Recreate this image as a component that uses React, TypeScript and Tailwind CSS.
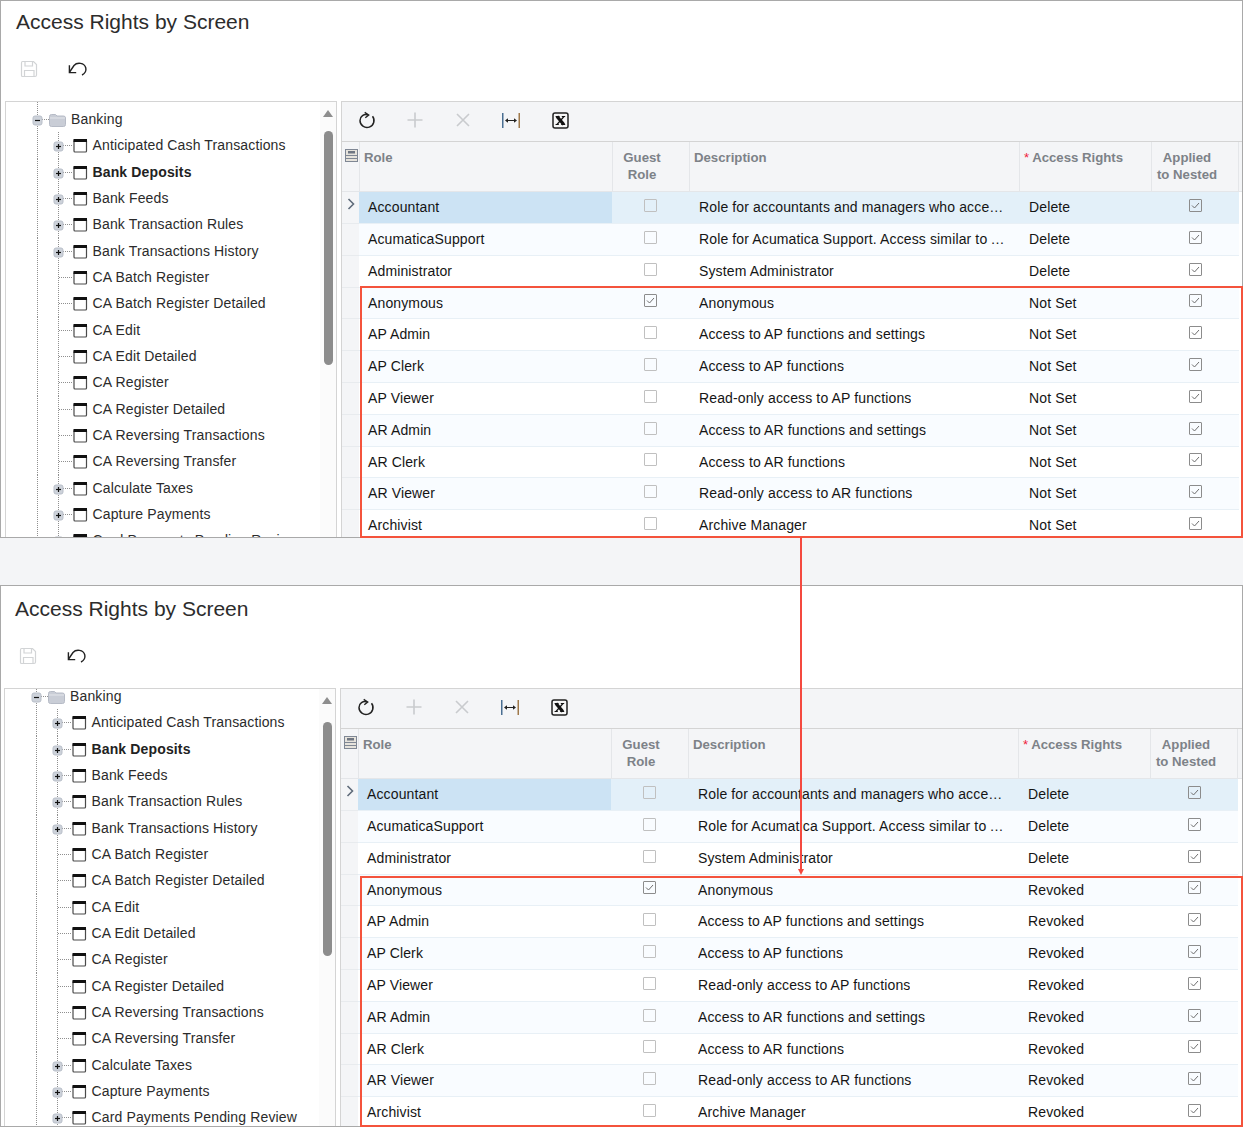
import React from 'react';

const treeItems: { name: string; plus?: boolean; bold?: boolean }[] = [
  { name: 'Anticipated Cash Transactions', plus: true },
  { name: 'Bank Deposits', plus: true, bold: true },
  { name: 'Bank Feeds', plus: true },
  { name: 'Bank Transaction Rules', plus: true },
  { name: 'Bank Transactions History', plus: true },
  { name: 'CA Batch Register' },
  { name: 'CA Batch Register Detailed' },
  { name: 'CA Edit' },
  { name: 'CA Edit Detailed' },
  { name: 'CA Register' },
  { name: 'CA Register Detailed' },
  { name: 'CA Reversing Transactions' },
  { name: 'CA Reversing Transfer' },
  { name: 'Calculate Taxes', plus: true },
  { name: 'Capture Payments', plus: true },
  { name: 'Card Payments Pending Review', plus: true },
];

const roles: { role: string; guest?: boolean; desc: string; rights: string }[] = [
  { role: 'Accountant', desc: 'Role for accountants and managers who access financial data', rights: 'Delete' },
  { role: 'AcumaticaSupport', desc: 'Role for Acumatica Support. Access similar to Administrator', rights: 'Delete' },
  { role: 'Administrator', desc: 'System Administrator', rights: 'Delete' },
  { role: 'Anonymous', guest: true, desc: 'Anonymous', rights: 'x' },
  { role: 'AP Admin', desc: 'Access to AP functions and settings', rights: 'x' },
  { role: 'AP Clerk', desc: 'Access to AP functions', rights: 'x' },
  { role: 'AP Viewer', desc: 'Read-only access to AP functions', rights: 'x' },
  { role: 'AR Admin', desc: 'Access to AR functions and settings', rights: 'x' },
  { role: 'AR Clerk', desc: 'Access to AR functions', rights: 'x' },
  { role: 'AR Viewer', desc: 'Read-only access to AR functions', rights: 'x' },
  { role: 'Archivist', desc: 'Archive Manager', rights: 'x' },
];

const Dots = ({ x1, y1, x2, y2 }: { x1: number; y1: number; x2: number; y2: number }) => (
  <line x1={x1} y1={y1} x2={x2} y2={y2} stroke="#8f8f8f" strokeWidth="1" strokeDasharray="1 1" />
);

const ExpandBox = ({ cx, cy, minus }: { cx: number; cy: number; minus?: boolean }) => (
  <g>
    <rect x={cx - 4.5} y={cy - 4.5} width="9" height="9" rx="2" fill="#cdd2da" stroke="#b9bfc9" />
    <path d={`M${cx - 2.5} ${cy}H${cx + 2.5}`} stroke="#111" strokeWidth="1.2" />
    {!minus && <path d={`M${cx} ${cy - 2.5}V${cy + 2.5}`} stroke="#111" strokeWidth="1.2" />}
  </g>
);

const BankingRow = () => (
  <div className="flex items-center h-[26.33px] text-[14px] tracking-[0.14px] text-[#2b2b2b]">
    <svg width="65" height="27" className="shrink-0 overflow-visible">
      <Dots x1={31.5} y1={-8} x2={31.5} y2={27} />
      <Dots x1={36} y1={13.5} x2={43} y2={13.5} />
      <ExpandBox cx={31.5} cy={14.5} minus />
      <path d="M43.5 10.5q0-2 2-2h4l1.5 1.5h6.5q2 0 2 2v6.5q0 2-2 2h-12q-2 0-2-2z" fill="#c9cdd6" stroke="#b6bbc6" />
      <path d="M44 12h15" stroke="#e4e6eb" />
    </svg>
    <span className="whitespace-nowrap">Banking</span>
  </div>
);

const TreeRow = ({ name, plus, bold }: { name: string; plus?: boolean; bold?: boolean }) => (
  <div className="flex items-center h-[26.33px] text-[14px] tracking-[0.14px] text-[#2b2b2b]">
    <svg width="86.5" height="27" className="shrink-0 overflow-visible">
      <Dots x1={31.5} y1={0} x2={31.5} y2={27} />
      <Dots x1={52.5} y1={0} x2={52.5} y2={27} />
      <Dots x1={53} y1={13.5} x2={67} y2={13.5} />
      {plus && <ExpandBox cx={52.5} cy={14.5} />}
      <rect x="68" y="8" width="12.5" height="12" rx="1" fill="#fff" stroke="#4a4a4a" strokeWidth="1.2" />
      <rect x="67.5" y="7" width="13.5" height="3" fill="#111" />
    </svg>
    <span className={`whitespace-nowrap ${bold ? 'font-bold text-[#222]' : ''}`}>{name}</span>
  </div>
);

const SaveIcon = () => (
  <svg width="18" height="18" viewBox="0 0 18 18" fill="none" stroke="#d2d4d6" strokeWidth="1.2">
    <path d="M2.5 1.5h11l3 3v10.5q0 1.5-1.5 1.5h-12.5q-1 0-1-1.5v-12q0-1.5 1-1.5z" />
    <path d="M5 1.5v4.5h7.5v-4.5M4.5 16.5v-6h9.5v6" />
  </svg>
);

const UndoIcon = () => (
  <svg width="20" height="18" viewBox="0 0 20 18" fill="none" stroke="#222" strokeWidth="1.4">
    <path d="M1.6 12L6 5.5C9 2 16.5 2.5 17.8 8C18.5 11.5 16 14 14 15" />
    <path d="M1.4 5.2v7.4h6.8" />
  </svg>
);

const RefreshIcon = () => (
  <svg width="18" height="20" viewBox="0 0 18 20" fill="none" stroke="#222" strokeWidth="1.5">
    <path d="M10 5C6 3.6 2 6.5 2 10.5A7 7 0 1 0 14.5 6.2" />
    <path d="M6.7 2.3L10.7 5L7.3 7.7" strokeWidth="1.4" />
  </svg>
);

const PlusIcon = () => (
  <svg width="18" height="18" viewBox="0 0 18 18" stroke="#c9cbce" strokeWidth="1.6">
    <path d="M9 1.5v15M1.5 9h15" />
  </svg>
);

const CloseIcon = () => (
  <svg width="18" height="18" viewBox="0 0 18 18" stroke="#c9cbce" strokeWidth="1.6">
    <path d="M3 3l12 12M15 3l-12 12" />
  </svg>
);

const FitIcon = () => (
  <svg width="18" height="15" viewBox="0 0 18 15" fill="#222" stroke="#222">
    <path d="M.8 0v15" stroke="#1f4d78" strokeWidth="1.2" />
    <path d="M17.2 0v15" stroke="#8a5a1f" strokeWidth="1.2" />
    <path d="M4 7.5h10" strokeWidth="1" />
    <path d="M3 7.5l3-2.2v4.4zM15 7.5l-3-2.2v4.4z" stroke="none" />
  </svg>
);

const ExcelIcon = () => (
  <svg width="17" height="17" viewBox="0 0 17 17" fill="none">
    <rect x="1" y="1" width="15" height="15" rx="2" fill="#f7f7f7" stroke="#222" strokeWidth="1.5" />
    <path d="M5 4.5l6.8 8" stroke="#111" strokeWidth="3.2" />
    <path d="M12 4.5l-7 8" stroke="#111" strokeWidth="1.2" />
    <path d="M3.6 4.5h4M9.8 4.5h3.4M3.6 12.5h3.2M9.2 12.5h4" stroke="#111" strokeWidth="1" />
  </svg>
);

const Checkbox = ({ checked }: { checked?: boolean }) => (
  <div className={`w-[13px] h-[13px] border flex items-center justify-center -mt-[5px] rounded-[1px] ${checked ? 'border-[#8c8c8c]' : 'border-[#c0c0c0]'}`}>
    {checked && (
      <svg width="11" height="11" viewBox="0 0 11 11" fill="none" stroke="#6f6f6f" strokeWidth="1">
        <path d="M2 5.5l2.5 2.5 4.5-5" />
      </svg>
    )}
  </div>
);

const Grid = ({ rights }: { rights: string }) => (
  <div className="flex-1 border-t border-l border-[#d4d4d4] bg-white min-w-0">
    <div className="flex items-center h-10 pb-[3px] bg-[#f4f5f7] border-b border-[#d4d4d4]">
      <div className="flex items-center justify-center w-[49px]"><RefreshIcon /></div>
      <div className="flex items-center justify-center w-[48px]"><PlusIcon /></div>
      <div className="flex items-center justify-center w-[48px]"><CloseIcon /></div>
      <div className="flex items-center justify-center w-[48px]"><FitIcon /></div>
      <div className="flex items-center justify-center w-[50px]"><ExcelIcon /></div>
    </div>
    <div className="grid grid-cols-[17px_253px_77px_330px_132px_88px_1fr] h-[50px] bg-[#f4f5f7] text-[13.2px] leading-[17px] font-bold text-[#7d8288] border-b border-[#e4e6e9]">
      <div className="pt-[7px] pl-[3px]">
        <svg width="13" height="13" viewBox="0 0 13 13">
          <rect x="0.5" y="0.5" width="12" height="12" fill="#e6e3dc" stroke="#7f8794" />
          <rect x="3" y="2" width="7" height="2.5" fill="#6f7682" />
          <path d="M1 6.5h11M1 9.5h11" stroke="#7f8794" />
        </svg>
      </div>
      <div className="border-l border-[#e4e6e9] pl-[4px] pt-[7px]">Role</div>
      <div className="border-l border-[#e4e6e9] pt-[7px] pr-[18px] text-center">Guest<br />Role</div>
      <div className="border-l border-[#e4e6e9] pl-1 pt-[7px]">Description</div>
      <div className="border-l border-[#e4e6e9] pl-1 pt-[7px]"><span className="text-[#f0203a] font-normal mr-[3px]">*</span>Access Rights</div>
      <div className="border-l border-r border-[#e4e6e9] pt-[7px] pr-4 text-center">Applied<br />to Nested</div>
      <div />
    </div>
    {roles.map((r, i) => {
      const selected = i === 0;
      const tint = i % 2 === 1;
      return (
        <div key={r.role} className={`grid grid-cols-[17px_253px_77px_330px_132px_88px_1fr] text-[14px] tracking-[0.13px] text-[#151515] ${i === 3 || i === 8 ? 'h-[31px]' : 'h-[32px]'} ${selected ? 'bg-[#e3f0f9]' : tint ? 'bg-[#f9fcff]' : 'bg-white'}`}>
          <div className="bg-[#f4f5f7] border-b border-[#e8ebee] flex justify-center pt-[5px]">
            {selected && (
              <svg width="8" height="14" viewBox="0 0 8 14" fill="none" stroke="#5f6b7a" strokeWidth="1.6">
                <path d="M1.5 2l5 5-5 5" />
              </svg>
            )}
          </div>
          <div className={`pl-[9px] flex items-center border-b border-[#e8f0f6] ${selected ? 'bg-[#cce3f4]' : ''}`}>{r.role}</div>
          <div className="flex items-center justify-center border-b border-[#e8f0f6]"><Checkbox checked={r.guest} /></div>
          <div className="pl-[10px] pr-[12px] flex items-center border-b border-[#e8f0f6] min-w-0"><span className="truncate">{r.desc}</span></div>
          <div className="pl-[10px] flex items-center border-b border-[#e8f0f6]">{r.rights === 'x' ? rights : r.rights}</div>
          <div className="flex items-center justify-center border-b border-[#e8f0f6]"><Checkbox checked /></div>
          <div className="bg-white" />
        </div>
      );
    })}
  </div>
);

const Panel = ({ second }: { second?: boolean }) => (
  <div className={`border border-[#a9a9a9] bg-white overflow-hidden ${second ? 'h-[542px] pt-[2px]' : 'h-[538px]'}`}>
    <div className={`flex flex-col ${second ? '-ml-px' : ''}`}>
      <div className="pl-[15px] h-[42px] flex items-center text-[21px] text-[#2c2c2c] whitespace-nowrap">Access Rights by Screen</div>
      <div className="flex items-center h-[52px] mb-[6px] pl-[19px]">
        <SaveIcon />
        <div className="ml-[30px]"><UndoIcon /></div>
      </div>
      <div className="flex gap-1 pl-1 h-[470px]">
        <div className="flex w-[332px] shrink-0 border-t border-l border-r border-[#d4d4d4] bg-white">
          <div className={`flex-1 overflow-hidden min-w-0 ${second ? 'pt-0' : 'pt-[4.4px]'}`}>
            <div className={second ? '-mt-[5.6px]' : ''}>
              <BankingRow />
              {treeItems.map(t => <TreeRow key={t.name} {...t} />)}
            </div>
          </div>
          <div className="w-[16px] shrink-0 bg-[#fbfbfb] flex flex-col items-center pt-[8px]">
            <div className="w-0 h-0 border-l-[5px] border-r-[5px] border-b-[7px] border-l-transparent border-r-transparent border-b-[#8e8e8e]" />
            <div className={`w-[9px] h-[234px] rounded-full bg-[#8c8c8c] ${second ? 'mt-[18px]' : 'mt-[14px]'}`} />
          </div>
        </div>
        <Grid rights={second ? 'Revoked' : 'Not Set'} />
      </div>
    </div>
  </div>
);

export default function App() {
  return (
    <div className="relative w-[1243px] h-[1127px] bg-[#f4f5f7] overflow-hidden font-['Liberation_Sans',Arial,sans-serif]">
      <Panel />
      <div className="h-[47px]" />
      <Panel second />
      {/* callout frames and the arrow between them sit over the two screens */}
      <div className="absolute left-[360px] top-[286px] w-[883px] h-[252px] border-2 border-[#f4533c]" />
      <div className="absolute left-[360px] top-[876px] w-[883px] h-[251px] border-2 border-[#f4533c]" />
      <svg className="absolute left-[795px] top-[537px]" width="12" height="339" viewBox="0 0 12 339">
        <path d="M6 0v333" stroke="#f4493f" strokeWidth="2" />
        <path d="M3 332h6l-3 6z" fill="#f4493f" />
      </svg>
    </div>
  );
}
